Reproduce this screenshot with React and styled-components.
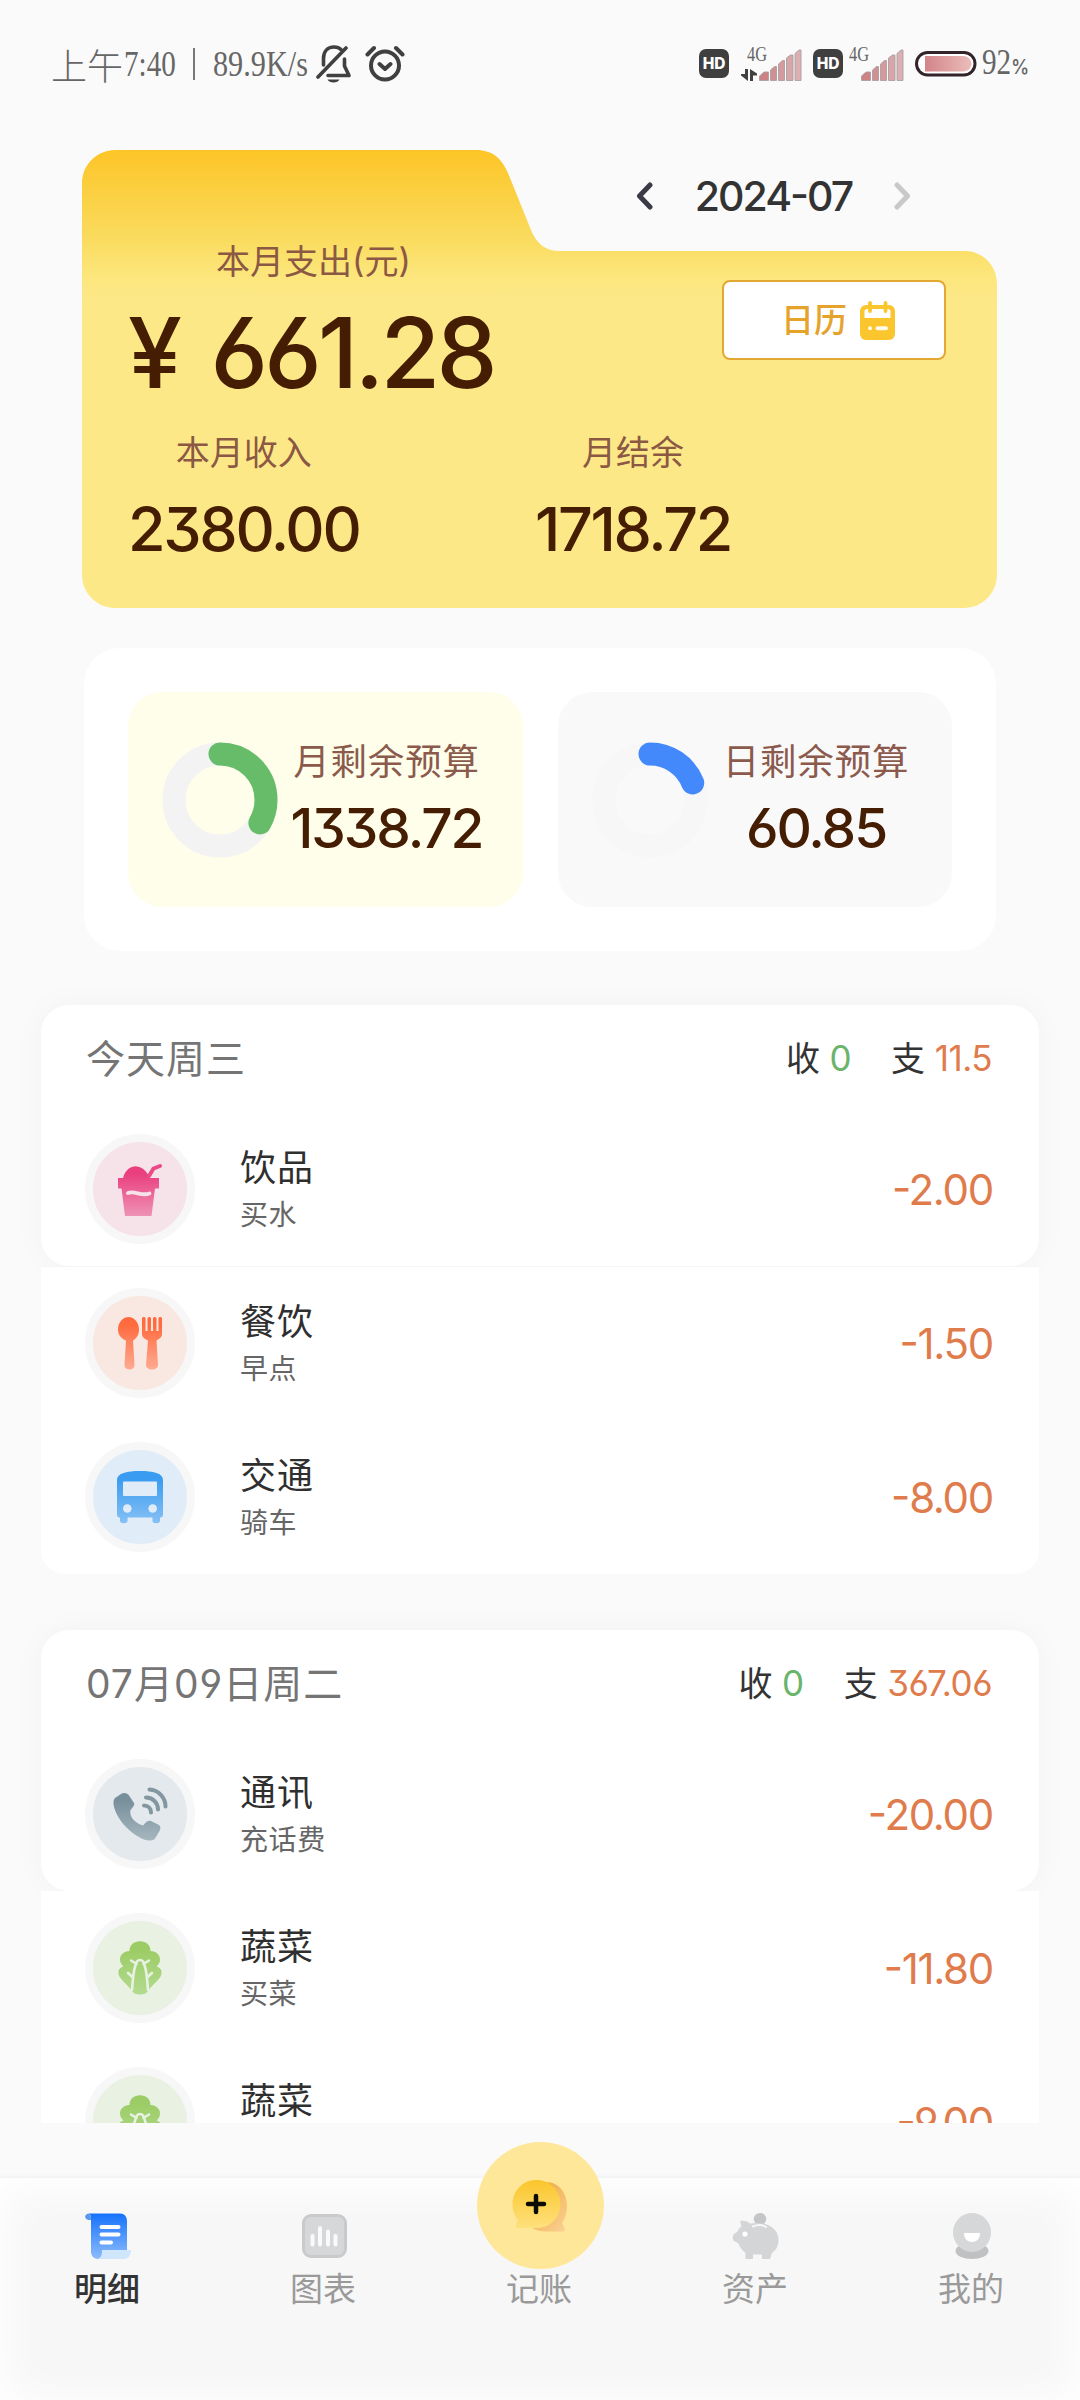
import styled, { createGlobalStyle } from "styled-components";

const sans = `Inter, "Noto Sans CJK SC", sans-serif`;
const serif = `"Liberation Serif", "Noto Sans CJK SC", serif`;

const days = [
    {
        title: '今天周三', income: '0', expense: '11.5', divided: true,
        rows: [
            {icon: 'drink', name: '饮品', note: '买水', amount: '-2.00'},
            {icon: 'meal', name: '餐饮', note: '早点', amount: '-1.50'},
            {icon: 'bus', name: '交通', note: '骑车', amount: '-8.00'},
        ],
    },
    {
        title: '07月09日周二', income: '0', expense: '367.06', divided: false,
        rows: [
            {icon: 'phone', name: '通讯', note: '充话费', amount: '-20.00'},
            {icon: 'veg', name: '蔬菜', note: '买菜', amount: '-11.80'},
            {icon: 'veg', name: '蔬菜', note: '', amount: '-9.00'},
        ],
    },
];

const palette = {
    drink: {bg: '#f6e2e9', from: '#ea3f7e', to: '#ee92b5'},
    meal: {bg: '#f9e7e1', from: '#ff6b3f', to: '#fdab92'},
    bus: {bg: '#e0edf8', from: '#3a9cf0', to: '#86c0f5'},
    phone: {bg: '#e4e9ed', from: '#78909c', to: '#a6b6be'},
    veg: {bg: '#e8f1e2', from: '#9ccc65', to: '#b2db90'},
};

// Status bar drawings
const BellOff = () => (
    <svg width="36" height="38" viewBox="0 0 36 38" fill="none" stroke="#404040" strokeWidth="3.6" strokeLinecap="round" strokeLinejoin="round">
        <path d="M7.500 20V13.500C7.500 6.500 11.500 2 18 2C21 2 23.500 3 25 4.500" />
        <path d="M28.500 14V21L33 30.500H12" />
        <path d="M2 32L30 3" />
        <path d="M11.500 34.500H23.500C22 38.500 13 38.500 11.500 34.500Z" fill="#404040" stroke="none" />
    </svg>
);

const Alarm = () => (
    <svg width="40" height="38" viewBox="0 0 40 38" fill="none" stroke="#404040" strokeWidth="4" strokeLinecap="round" strokeLinejoin="round">
        <circle cx="20" cy="20.500" r="14" />
        <path d="M14.500 19L20 24L25.500 19M2.500 9.500L9 3M37.500 9.500L31 3" />
    </svg>
);

const Arrows = () => (
    <svg width="16" height="12" viewBox="0 0 16 12" fill="#404040">
        <path d="M4 0H7V12L0 6.500V5H4ZM9 12V0L16 4.500V6.500H12V12Z" />
    </svg>
);

const Bars = () => (
    <svg width="43" height="32" viewBox="0 0 43 32" stroke="#a8a0a2" strokeWidth="0.9">
        <path fill="#cd8386" d="M0.500 31.500V27L5 23H9.500V31.500Z" />
        <path fill="#d08f92" d="M11.500 31.500V21L15.500 17.500H17.500V31.500Z" />
        <path fill="#d49a9d" d="M19.500 31.500V15L23.500 11.500H25.500V31.500Z" />
        <path fill="#d8a6a8" d="M27.500 31.500V9L31.500 6H34V31.500Z" />
        <path fill="#dcb0b2" d="M36 31.500V4.500L40 1H42V31.500Z" />
    </svg>
);

const Battery = () => (
    <svg width="62" height="26" viewBox="0 0 62 26">
        <defs>
            <linearGradient id="battery">
                <stop offset="0" stopColor="#d38488" />
                <stop offset="1" stopColor="#ebbdbb" />
            </linearGradient>
        </defs>
        <rect x="1.500" y="1.500" width="58.500" height="22.500" rx="11.200" fill="#fff" stroke="#33232a" strokeWidth="3" />
        <path fill="url(#battery)" d="M10 5H48C53 5 56.500 8.500 56.500 12.800S53 20.500 48 20.500H10Z" />
    </svg>
);

// Card drawings
const Chevron = ({color, flip}) => (
    <svg width="17" height="28" viewBox="0 0 17 28" fill="none" stroke={color} strokeWidth="5" strokeLinecap="round" strokeLinejoin="round">
        <path d={flip ? 'M3 3L13.500 14L3 25' : 'M14 3L3.500 14L14 25'} />
    </svg>
);

const CalendarIcon = () => (
    <svg width="35" height="39" viewBox="0 0 35 39">
        <rect y="4" width="35" height="35" rx="6" fill="#fbc52e" />
        <path d="M4.500 10.500C4.500 9 5.500 8 7 8H28C29.500 8 30.500 9 30.500 10.500V17H4.500Z" fill="#fff" />
        <path d="M10 2V10M25.500 2V10" stroke="#fbc52e" strokeWidth="3.800" strokeLinecap="round" />
        <path d="M10 27.300V27.310M17.500 27.300H26" stroke="#fffbe8" strokeWidth="4" strokeLinecap="round" />
    </svg>
);

const Donut = ({value, color, track}) => {
    const length = 2 * Math.PI * 46;
    return (
        <svg width="116" height="116" viewBox="0 0 116 116" fill="none" strokeWidth="23">
            <circle cx="58" cy="58" r="46" stroke={track} />
            <circle
                cx="58" cy="58" r="46" stroke={color} strokeLinecap="round"
                strokeDasharray={`${length * value} ${length}`}
                transform="rotate(-90 58 58)" />
        </svg>
    );
};

// Category drawings, all on the same 94px disc
const glyphs = {
    drink: (fill, bg) => (
        <>
            <path fill={fill} d="M30 36C32 28 38 24.300 42.500 24.300S54 28 56.500 36H66V46.500H62L58.500 74H32L28.500 46.500H25V36Z" />
            <path d="M56 34L60.500 26.500L67 24" stroke="#ea4a85" strokeWidth="4" strokeLinecap="round" fill="none" />
            <path d="M35 51C42 48.500 48 54.500 56.500 51.500" stroke={bg} strokeWidth="3.800" strokeLinecap="round" fill="none" />
        </>
    ),
    meal: fill => (
        <>
            <path fill={fill} d="M35.500 21C41.500 21 46 27 46 33.500C46 39 43.500 42.500 40 44.500L41.500 69C41.500 75 31.500 75 31.500 69L33 44.500C28 42.500 25 39 25 33.500C25 27 29.500 21 35.500 21Z" />
            <path fill={fill} d="M49 22.500C49 20.500 52.500 20.500 52.500 22.500V35H54.500V22.500C54.500 20.500 58 20.500 58 22.500V35H60V22.500C60 20.500 63.500 20.500 63.500 22.500V35H65.500V22.500C65.500 20.500 69 20.500 69 22.500V38C69 41.500 66 43 63.500 44.500L65 69C65 75 53 75 53 69L55 44.500C52 43 49 41.500 49 38Z" />
        </>
    ),
    bus: (fill, bg) => (
        <>
            <path fill={fill} d="M24 30C24 23 34 21 47 21S70 23 70 30V64C70 67 68.500 67.500 67 67.500V71C67 74 59.500 74 59.500 71V67.500H34.500V71C34.500 74 27 74 27 71V67.500C25.500 67.500 24 67 24 64Z" />
            <rect x="30" y="31.500" width="34" height="14.500" rx="1" fill={bg} />
            <circle cx="34.300" cy="58.500" r="4.300" fill={bg} />
            <circle cx="59.700" cy="58.500" r="4.300" fill={bg} />
        </>
    ),
    phone: fill => (
        <>
            <path fill={fill} d="M22 31L28 27C31 25 35 26.500 36 28.500L41 36C42 38 40 40 37.500 43C36 50 42 56 50 58.500C53 54 56 53 58 54L66 58C68 59.500 67.500 62 66.500 64L62 71.500C60 74 55 74 51 72.500C36 66.500 22 50 20.500 37C20.300 34 21 32 22 31Z" />
            <path fill="none" stroke="#82979f" strokeWidth="4" strokeLinecap="round" d="M51 38.500C55 38.500 58 41.500 58 45.500M53 30.500C60 30.500 65 36 65 42.500M56.500 22.500C65.500 23 72.500 30.500 72.500 39.500" />
        </>
    ),
    veg: (fill, bg) => (
        <>
            <path fill={fill} d="M36.500 30C36.500 24 41 20.300 47 20.300S57.500 24 57.500 30C62 30 67 33 67 38.500C67 41.500 65.500 44 63.500 45.500C67 46.500 69 49 68.500 52.500C68 57.500 63 60 56.500 68C53.500 73 50.500 73.500 47 73.500S40.500 73 37.500 68C31 60 26 57.500 25.500 52.500C25 49 27 46.500 30.500 45.500C28.500 44 27 41.500 27 38.500C27 33 32 30 36.500 30Z" />
            <path fill="none" stroke={bg} strokeWidth="2.600" strokeLinecap="round" d="M39 69C40 58 40 47 44 40.500C45.500 38.500 48.500 38.500 50 40.500C54 47 54 58 55 69M43.500 43L38 39.500M50.500 43L56 39.500M40 56.500L35 52M54 56.500L59 52" />
        </>
    ),
};

const CategoryIcon = ({kind}) => {
    const {bg, from, to} = palette[kind];
    return (
        <Disc $bg={bg}>
            <svg width="94" height="94" viewBox="0 0 94 94">
                <defs>
                    <linearGradient id={`fill-${kind}`} x1="0" y1="0" x2="0" y2="1">
                        <stop offset="0.150" stopColor={from} />
                        <stop offset="1" stopColor={to} />
                    </linearGradient>
                </defs>
                {glyphs[kind](`url(#fill-${kind})`, bg)}
            </svg>
        </Disc>
    );
};

// Tab drawings
const DetailIcon = () => (
    <svg width="46" height="46" viewBox="0 0 46 46">
        <defs>
            <linearGradient id="detail" x1="0" y1="0" x2="0" y2="1">
                <stop offset="0" stopColor="#1672fb" />
                <stop offset="1" stopColor="#8dbcfc" />
            </linearGradient>
        </defs>
        <path fill="url(#detail)" d="M3.500 0.500H35C39.500 0.500 42 3.500 42 8V38L16 46H13C9 46 6 43 6 38.500V6C6 3 5.500 1 3.500 0.500Z" />
        <path fill="#5a98ee" d="M3.500 0.500C5.500 1 6 3 6 7H3.500C-1 6.500-1 1 3.500 0.500Z" />
        <path fill="#cfe6fd" d="M17 37H46C45.500 42.500 44 46 39 46H12C16 45.500 17 42 17 37Z" />
        <path stroke="#fff" strokeWidth="4" strokeLinecap="round" d="M16.500 14H33.500M16.500 21.500H33.500M16.500 29.500H26" />
    </svg>
);

const ChartIcon = () => (
    <svg width="46" height="46" viewBox="0 0 46 46">
        <rect x="2.500" y="2.500" width="42" height="41" rx="7.500" fill="#d5d7d9" stroke="#c8cacc" strokeWidth="3" />
        <path stroke="#fafafa" strokeWidth="4" strokeLinecap="round" d="M11.500 23V31.500M19 15V31.500M27 18.500V31.500M34.500 23V31.500" />
    </svg>
);

const AddIcon = () => (
    <svg width="56" height="54" viewBox="0 0 56 54">
        <defs>
            <linearGradient id="bubble" x1="0" y1="0" x2="0" y2="1">
                <stop offset="0" stopColor="#fbc62c" />
                <stop offset="1" stopColor="#fee07c" />
            </linearGradient>
            <linearGradient id="bubbleShade" x1="0" y1="0" x2="1" y2="1">
                <stop offset="0.300" stopColor="#f0b050" />
                <stop offset="1" stopColor="#fbd295" />
            </linearGradient>
        </defs>
        <path fill="url(#bubbleShade)" d="M34 3C47 3 55 14 55 27C55 36 52 41 50 44L53 50C53 52 52 52.500 50 52.500H32C22 52 15 46 13 40Z" />
        <path fill="url(#bubble)" d="M24.500 1C38 1 48.500 11.500 48.500 25S38 49 24.500 49H5C3 49 3 47 4 45L6 41C2.500 37 0.500 31 0.500 25C0.500 11.500 11 1 24.500 1Z" />
        <path stroke="#0b0a05" strokeWidth="4.500" strokeLinecap="round" d="M16 25H32M24 17V33" />
    </svg>
);

const PiggyIcon = () => (
    <svg width="48" height="46" viewBox="0 0 48 46">
        <ellipse cx="28" cy="6" rx="6.300" ry="6" fill="#c3c5c7" />
        <path fill="#d3d5d7" d="M8 8C12 7 16 8.500 18 10.500C23 9.500 31 9.500 36 12C43 15 47 21 46.500 28C46 34 44 37 40 40L38 46H30V41.500H21V46H13.500V40C10 37 7.500 34 6.500 30.500L1.500 27.500C0.500 26 0.500 23 1.500 21.500L5.500 18.500C6.500 16 8 14.500 9.500 13.500Z" />
        <path d="M21 13.500C25 11.500 30 11.500 34 14" stroke="#f7f7f7" strokeWidth="2" strokeLinecap="round" fill="none" />
        <circle cx="13" cy="21" r="2.600" fill="#fff" />
    </svg>
);

const MineIcon = () => (
    <svg width="40" height="46" viewBox="0 0 40 46">
        <ellipse cx="20" cy="38" rx="16.500" ry="8" fill="#bfc1c3" />
        <ellipse cx="20" cy="19.500" rx="19" ry="19.500" fill="#d5d7d9" />
        <path fill="#fff" d="M12 20H28C28 25.500 25 29 20 29S12 25.500 12 20Z" />
    </svg>
);

const Signal = ({arrows}) => (
    <SignalGroup $arrows={arrows}>
        <SignalLabel $arrows={arrows}>
            <Network>4G</Network>
            {arrows && <Arrows />}
        </SignalLabel>
        <Bars />
    </SignalGroup>
);

const Day = ({title, income, expense, divided, rows}) => {
    const [first, ...rest] = rows;
    return (
        <DayGroup>
            <DayTop>
                <DayHeader>
                    <DayTitle>{title}</DayTitle>
                    <Totals>
                        <Total $color="#6ab46c">收 <b>{income}</b></Total>
                        <Total $color="#e07b4c">支 <b>{expense}</b></Total>
                    </Totals>
                </DayHeader>
                <Record {...first} />
            </DayTop>
            <DayRest $divided={divided}>
                {rest.map((row, i) => <Record key={i} {...row} />)}
            </DayRest>
        </DayGroup>
    );
};

const Record = ({icon, name, note, amount}) => (
    <Row>
        <CategoryIcon kind={icon} />
        <RowText>
            <RowName>{name}</RowName>
            <RowNote>{note}</RowNote>
        </RowText>
        <Amount>{amount}</Amount>
    </Row>
);

const App = () => {
    return (
        <Page>
            <GlobalStyle />
            <StatusBar>
                <StatusSide>
                    <Meridiem>上午</Meridiem>
                    <Narrow $width={52}>7:40</Narrow>
                    <Bar />
                    <Narrow $width={103} $scale={0.84}>89.9K/s</Narrow>
                    <BellOff />
                    <Gap />
                    <Alarm />
                </StatusSide>
                <StatusSide>
                    <Hd>HD</Hd>
                    <Signal arrows />
                    <Hd>HD</Hd>
                    <Signal />
                    <Battery />
                    <Percent><Narrow $width={29}>92</Narrow><small>%</small></Percent>
                </StatusSide>
            </StatusBar>

            <Folder>
                <FolderTop>
                    <Stat $size={97} $gap={21} $line={100} $indent={5}>
                        <span>本月支出(元)</span>
                        <strong>¥ 661.28</strong>
                    </Stat>
                    <FolderSide>
                        <MonthBar>
                            <Chevron color="#3b3b48" />
                            <span>2024-07</span>
                            <Chevron color="#c9c9c9" flip />
                        </MonthBar>
                        <CalendarButton>日历<CalendarIcon /></CalendarButton>
                    </FolderSide>
                </FolderTop>
                <FolderBottom>
                    <Stat $size={61} $gap={26} $line={60}>
                        <span>本月收入</span>
                        <strong>2380.00</strong>
                    </Stat>
                    <Stat $size={61} $gap={26} $line={60}>
                        <span>月结余</span>
                        <strong>1718.72</strong>
                    </Stat>
                </FolderBottom>
            </Folder>

            <BudgetPanel>
                <Budget $bg="#fefeea">
                    <Donut value={0.3325} color="#67bc6a" track="#f3f3f4" />
                    <BudgetText>
                        <span>月剩余预算</span>
                        <strong>1338.72</strong>
                    </BudgetText>
                </Budget>
                <Budget $bg="#f9f9f9">
                    <Donut value={0.189} color="#4489fb" track="#f7f7f7" />
                    <BudgetText>
                        <span>日剩余预算</span>
                        <strong>60.85</strong>
                    </BudgetText>
                </Budget>
            </BudgetPanel>

            <List>
                {days.map(day => <Day key={day.title} {...day} />)}
            </List>

            <TabBar>
                <Tab $active><DetailIcon /><span>明细</span></Tab>
                <Tab><ChartIcon /><span>图表</span></Tab>
                <Tab>
                    <AddButton><AddIcon /></AddButton>
                    <span>记账</span>
                </Tab>
                <Tab><PiggyIcon /><span>资产</span></Tab>
                <Tab><MineIcon /><span>我的</span></Tab>
            </TabBar>
        </Page>
    );
}

const GlobalStyle = createGlobalStyle`
    *{
        box-sizing: border-box;
    }

    body{
        margin: 0;
        background: #fafafa;
        font-family: ${sans};
        font-feature-settings: "cv03", "cv04", "cv09", "case";
        color: #333;
    }

    svg{
        display: block;
        flex: none;
    }
`;

const Page = styled.div`
    display: flex;
    flex-direction: column;
    width: 1080px;
    height: 2400px;
    overflow: hidden;
    background: #fafafa;
`;

const StatusBar = styled.header`
    display: flex;
    justify-content: space-between;
    height: 150px;
    padding: 44px 49px 0 51px;
    font-family: ${serif};
    color: #666;
`;

const StatusSide = styled.div`
    display: flex;
    align-items: center;
    height: 40px;
`;

const Meridiem = styled.span`
    width: 73px;
    font-family: "Noto Sans CJK SC", sans-serif;
    font-size: 36px;
    font-weight: 300;
    line-height: 40px;
`;

const Narrow = styled.span`
    width: ${props => props.$width}px;
    font-size: 36px;
    line-height: 40px;
    white-space: nowrap;
    transform: scaleX(${props => props.$scale || 0.81});
    transform-origin: left center;
`;

const Bar = styled.i`
    width: 2px;
    height: 32px;
    margin: 0 18px 0 17px;
    background: #777;
`;

const Gap = styled.i`
    width: 13px;
`;

const Hd = styled.span`
    width: 30px;
    height: 29px;
    margin-top: -1px;
    border-radius: 7px;
    background: #3f3f3f;
    color: #fff;
    font: 800 15.5px/29px ${sans};
    text-align: center;
`;

const SignalGroup = styled.div`
    display: flex;
    align-items: flex-end;
    margin: 0 11px 0 ${props => props.$arrows ? 12 : 6}px;
    height: 34px;
`;

const SignalLabel = styled.div`
    display: flex;
    flex-direction: column;
    justify-content: space-between;
    width: ${props => props.$arrows ? 18 : 12}px;
    height: 35px;
    padding-left: ${props => props.$arrows ? 6 : 0}px;

    svg{
        margin-left: -6px;
    }
`;

const Network = styled.span`
    font-size: 21px;
    line-height: 16px;
    transform: scaleX(0.78);
    transform-origin: left center;
`;

const Percent = styled.span`
    display: flex;
    align-items: baseline;
    margin-left: 5px;

    small{
        font: 500 20px/40px ${sans};
        transform: scaleX(0.92);
        transform-origin: left center;
    }
`;

const Folder = styled.section`
    position: relative;
    height: 458px;
    margin: 0 83px 0 82px;

    &::before{
        content: '';
        position: absolute;
        inset: 0;
        background: linear-gradient(#fdc527 0, #fbcf40 40px, #fadc60 92px, #fce67c 125px, #fde888 150px);
        clip-path: path('M33 0H394C411 0 420 9 426 23L449 80C455 94 463 101 478 101H883C901 101 915 116 915 134V425C915 443 900 458 882 458H33C15 458 0 443 0 425V33C0 15 15 0 33 0Z');
    }
`;

const FolderTop = styled.div`
    position: relative;
    display: flex;
    justify-content: space-between;
    height: 283px;
    padding: 92px 0 0 46px;
`;

const FolderBottom = styled.div`
    position: relative;
    display: grid;
    grid-template-columns: 407px 1fr;
    justify-items: start;
    padding-left: 46px;
`;

const Stat = styled.div`
    display: flex;
    flex-direction: column;
    align-items: center;
    gap: ${props => props.$gap}px;

    span{
        padding-left: ${props => props.$indent || 0}px;
        color: #8b5843;
        font-size: 34px;
        line-height: 40px;
    }

    strong{
        color: #451d02;
        font-size: ${props => props.$size}px;
        font-weight: 500;
        line-height: ${props => props.$line}px;
        letter-spacing: -.038em;
        word-spacing: 10px;
    }
`;

const FolderSide = styled.div`
    display: flex;
    flex-direction: column;
    align-items: flex-end;
    width: 447px;
    margin-top: -92px;
`;

const MonthBar = styled.div`
    display: flex;
    align-items: center;
    justify-content: center;
    gap: 42px;
    width: 100%;
    height: 92px;
    color: #333;
    font-size: 41px;
    font-weight: 450;
    letter-spacing: -2px;
`;

const CalendarButton = styled.button`
    display: flex;
    align-items: center;
    gap: 13px;
    width: 224px;
    height: 80px;
    margin: 38px 51px 0 0;
    padding: 0 0 0 57px;
    border: 2px solid #e3a833;
    border-radius: 8px;
    background: #fff;
    color: #e5a32c;
    font: 500 33px/40px ${sans};
`;

const BudgetPanel = styled.section`
    display: flex;
    gap: 35px;
    height: 303px;
    margin: 40px 84px 0;
    padding: 44px;
    border-radius: 36px;
    background: #fff;
`;

const Budget = styled.div`
    display: flex;
    align-items: center;
    flex: 1;
    padding-left: 34px;
    border-radius: 34px;
    background: ${props => props.$bg};
`;

const BudgetText = styled.div`
    display: flex;
    flex-direction: column;
    align-items: center;
    width: 217px;
    margin-top: -9px;

    span{
        color: #8b5a4c;
        font-size: 36.5px;
        line-height: 50px;
        letter-spacing: .8px;
    }

    strong{
        margin-top: 16px;
        color: #451d02;
        font-size: 55px;
        font-weight: 500;
        line-height: 50px;
        letter-spacing: -.038em;
    }
`;

const List = styled.main`
    height: 1172px;
    padding: 54px 41px 0;
    overflow: hidden;
`;

const DayGroup = styled.section`
    margin-bottom: 56px;
`;

const DayTop = styled.div`
    height: 261px;
    border-radius: 28px;
    background: #fff;
    box-shadow: 0 0 32px rgba(0, 0, 0, .035);
`;

// Paints over the shadow of the block above it
const DayRest = styled.div`
    position: relative;
    border-radius: 0 0 24px 24px;
    background: #fff;
    box-shadow: ${props => props.$divided ? 'inset 0 1px #f5f5f5' : 'none'};
`;

const DayHeader = styled.div`
    display: flex;
    align-items: center;
    justify-content: space-between;
    height: 107px;
    padding: 0 47px 5px 45px;
`;

const DayTitle = styled.h2`
    margin: 0;
    color: #757575;
    font-size: 39px;
    font-weight: 400;
    letter-spacing: 1px;
`;

const Totals = styled.div`
    display: flex;
    gap: 40px;
`;

const Total = styled.span`
    font-size: 34px;

    b{
        color: ${props => props.$color};
        font-size: 35px;
        font-weight: 400;
        letter-spacing: -.5px;
    }
`;

const Row = styled.div`
    display: flex;
    align-items: center;
    height: 154px;
    padding: 0 46px 0 44px;
`;

const Disc = styled.div`
    width: 110px;
    height: 110px;
    border: 8px solid #f7f7f7;
    border-radius: 50%;
    background: ${props => props.$bg};
`;

const RowText = styled.div`
    flex: 1;
    margin-left: 45px;
`;

const RowName = styled.div`
    color: #2f2f2f;
    font-size: 36px;
    line-height: 50px;
    letter-spacing: 1px;
`;

const RowNote = styled.div`
    height: 42px;
    color: #666;
    font-size: 28px;
    line-height: 45px;
    letter-spacing: .6px;
`;

const Amount = styled.span`
    color: #e07b4c;
    font-size: 42px;
    letter-spacing: -1.3px;
`;

const TabBar = styled.nav`
    position: relative;
    display: grid;
    grid-template-columns: repeat(5, 1fr);
    height: 222px;
    margin-top: 55px;
    background: #f7f7f7;
    box-shadow: 0 -1px 5px rgba(0, 0, 0, .05), inset 0 6px 40px 6px #fff;
`;

const Tab = styled.a`
    display: flex;
    flex-direction: column;
    align-items: center;
    padding-top: 35px;

    span{
        margin: 10px 2px 0 0;
        color: ${props => props.$active ? '#333' : '#9a9a9a'};
        font-size: 33px;
        font-weight: ${props => props.$active ? 500 : 400};
        line-height: 40px;
    }
`;

// Sticks out above the bar without stretching its tab
const AddButton = styled.div`
    display: flex;
    align-items: center;
    justify-content: center;
    width: 127px;
    height: 127px;
    margin: -71px 0 -10px;
    border-radius: 50%;
    background: #ffe799;
`;

export default App;
